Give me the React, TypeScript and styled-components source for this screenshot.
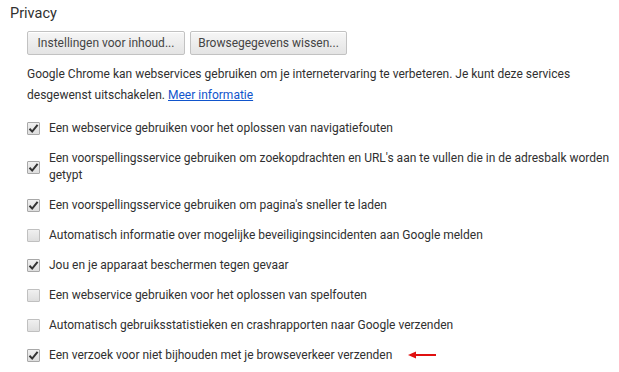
import styled, { createGlobalStyle } from "styled-components";

const GlobalStyle = createGlobalStyle`
    html, body {
        margin: 0;
        padding: 0;
        background: #ffffff;
    }
    body {
        font-family: Roboto, "Liberation Sans", sans-serif;
        font-size: 12px;
        color: #303030;
    }
`;

const Page = styled.div`
    width: 619px;
    height: 372px;
    box-sizing: border-box;
    padding: 5px 0 0 10px;
    overflow: hidden;
`;

const SectionTitle = styled.h3`
    margin: 0;
    font-size: 14.5px;
    font-weight: normal;
    color: #303030;
    line-height: 18px;
`;

const SectionBody = styled.div`
    padding-left: 17px;
    display: flex;
    flex-direction: column;
`;

const ButtonRow = styled.div`
    display: flex;
    gap: 5px;
    margin-top: 8px;
`;

const Button = styled.button<{ width: number }>`
    width: ${({ width }) => width}px;
    height: 24px;
    padding: 0;
    font-family: inherit;
    font-size: 12px;
    color: #444;
    border: 1px solid #c2c2c2;
    border-radius: 2px;
    background: linear-gradient(#f6f6f6, #e4e4e4);
    box-shadow: inset 0 1px 0 #fff;
`;

const Description = styled.p`
    margin: 9px 0 0;
    line-height: 21px;
    width: 560px;
`;

const Link = styled.a`
    color: #1155cc;
    text-decoration: underline;
`;

const OptionList = styled.div`
    display: flex;
    flex-direction: column;
    gap: 13px;
    margin-top: 14px;
`;

const Option = styled.label`
    display: flex;
    align-items: center;
    gap: 9px;
    line-height: 17px;
`;

const Box = styled.span<{ checked: boolean }>`
    flex: none;
    width: 11px;
    height: 11px;
    border: 1px solid ${({ checked }) => (checked ? "#a8a8a8" : "#c0c0c0")};
    border-radius: 1px;
    background: linear-gradient(#f0f0f0, #dedede);
    display: flex;
    align-items: center;
    justify-content: center;
`;

const OptionText = styled.span`
    max-width: 568px;
`;

const Arrow = styled.svg`
    margin-left: 16px;
`;

const CheckMark = () => (
    <svg width="11" height="11" viewBox="0 0 11 11">
        <path d="M1.5 5.8 L4.2 8.6 L9.6 1.8" fill="none" stroke="#333" strokeWidth="2" />
    </svg>
);

const options = [
    { text: "Een webservice gebruiken voor het oplossen van navigatiefouten", checked: true },
    {
        text: "Een voorspellingsservice gebruiken om zoekopdrachten en URL's aan te vullen die in de adresbalk worden getypt",
        checked: true,
    },
    { text: "Een voorspellingsservice gebruiken om pagina's sneller te laden", checked: true },
    { text: "Automatisch informatie over mogelijke beveiligingsincidenten aan Google melden", checked: false },
    { text: "Jou en je apparaat beschermen tegen gevaar", checked: true },
    { text: "Een webservice gebruiken voor het oplossen van spelfouten", checked: false },
    { text: "Automatisch gebruiksstatistieken en crashrapporten naar Google verzenden", checked: false },
    { text: "Een verzoek voor niet bijhouden met je browseverkeer verzenden", checked: true, arrow: true },
];

export default function App() {
    return (
        <>
            <GlobalStyle />
            <Page>
                <SectionTitle>Privacy</SectionTitle>
                <SectionBody>
                    <ButtonRow>
                        <Button width={158}>Instellingen voor inhoud...</Button>
                        <Button width={157}>Browsegegevens wissen...</Button>
                    </ButtonRow>
                    <Description>
                        Google Chrome kan webservices gebruiken om je internetervaring te verbeteren. Je kunt deze services
                        desgewenst uitschakelen. <Link href="#">Meer informatie</Link>
                    </Description>
                    <OptionList>
                        {options.map((item) => (
                            <Option key={item.text}>
                                <Box checked={item.checked}>{item.checked && <CheckMark />}</Box>
                                <OptionText>
                                    {item.text}
                                    {item.arrow && (
                                        <Arrow width="28" height="8" viewBox="0 0 28 8">
                                            <path d="M0 4 L8 0.5 L8 7.5 Z" fill="#e01010" />
                                            <rect x="7" y="3" width="21" height="2" fill="#e01010" />
                                        </Arrow>
                                    )}
                                </OptionText>
                            </Option>
                        ))}
                    </OptionList>
                </SectionBody>
            </Page>
        </>
    );
}
